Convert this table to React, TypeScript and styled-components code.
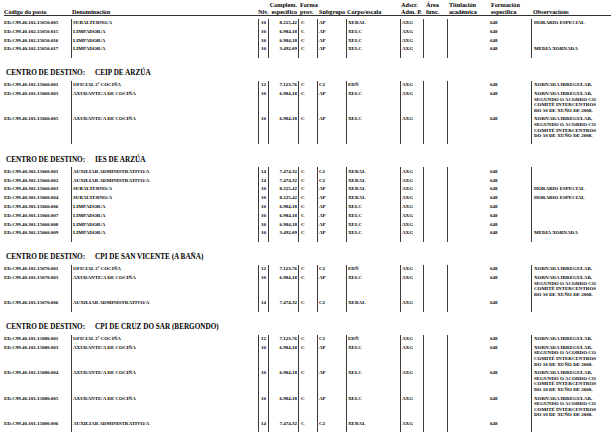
import React from "react";
import styled, { createGlobalStyle } from "styled-components";

const GlobalStyle = createGlobalStyle`
  html, body {
    margin: 0;
    padding: 0;
    background: #fff;
  }
  body {
    font-family: "Liberation Serif", "Times New Roman", serif;
    color: #000;
  }
`;

// column template shared by header and rows (x = 4 .. 611)
const COLS = "67px 187px 10px 30px 19px 29px 54px 23px 24px 41px 43px 1fr";

type Post = {
  code: string;
  den: string;
  niv: string;
  comp: string;
  sub: string;
  corpo: string;
  obs?: string[];
};

type Centre = {
  name?: string;
  posts: Post[];
};

const LONG = [
  "XORNADA IRREGULAR,",
  "SEGUNDO O ACORDO CO",
  "COMITÉ INTERCENTROS",
  "DO 10 DE XUÑO DE 2008.",
];
const IRREG = ["XORNADA IRREGULAR."];
const HORARIO = ["HORARIO ESPECIAL"];
const MEDIA = ["MEDIA XORNADA"];

const subalterno = (code: string, obs?: string[]): Post => ({
  code, den: "SUBALTERNO/A", niv: "10", comp: "8.225,42", sub: "AP", corpo: "XERAL", obs,
});
const limpador = (code: string, media = false): Post => ({
  code, den: "LIMPADOR/A", niv: "10", comp: media ? "3.492,09" : "6.984,18", sub: "AP", corpo: "XELC",
  obs: media ? MEDIA : undefined,
});
const oficial = (code: string): Post => ({
  code, den: "OFICIAL 2ª COCIÑA", niv: "12", comp: "7.123,76", sub: "C2", corpo: "EDÑ", obs: IRREG,
});
const axudante = (code: string): Post => ({
  code, den: "AXUDANTE/A DE COCIÑA", niv: "10", comp: "6.984,18", sub: "AP", corpo: "XELC", obs: LONG,
});
const auxiliar = (code: string): Post => ({
  code, den: "AUXILIAR ADMINISTRATIVO/A", niv: "14", comp: "7.474,32", sub: "C2", corpo: "XERAL",
});

const centres: Centre[] = [
  {
    posts: [
      subalterno("ED.C99.40.102.15050.005", HORARIO),
      limpador("ED.C99.40.102.15050.015"),
      limpador("ED.C99.40.102.15050.016"),
      limpador("ED.C99.40.102.15050.017", true),
    ],
  },
  {
    name: "CEIP DE ARZÚA",
    posts: [
      oficial("ED.C99.40.101.15060.001"),
      axudante("ED.C99.40.101.15060.003"),
      axudante("ED.C99.40.101.15060.005"),
    ],
  },
  {
    name: "IES DE ARZÚA",
    posts: [
      auxiliar("ED.C99.40.301.15060.001"),
      auxiliar("ED.C99.40.301.15060.002"),
      subalterno("ED.C99.40.301.15060.003", HORARIO),
      subalterno("ED.C99.40.301.15060.004", HORARIO),
      limpador("ED.C99.40.301.15060.006"),
      limpador("ED.C99.40.301.15060.007"),
      limpador("ED.C99.40.301.15060.008"),
      limpador("ED.C99.40.301.15060.009", true),
    ],
  },
  {
    name: "CPI DE SAN VICENTE (A BAÑA)",
    posts: [
      oficial("ED.C99.40.101.15070.001"),
      axudante("ED.C99.40.101.15070.003"),
      auxiliar("ED.C99.40.101.15070.006"),
    ],
  },
  {
    name: "CPI DE CRUZ DO SAR (BERGONDO)",
    posts: [
      oficial("ED.C99.40.101.15080.001"),
      axudante("ED.C99.40.101.15080.003"),
      axudante("ED.C99.40.101.15080.004"),
      axudante("ED.C99.40.101.15080.005"),
      auxiliar("ED.C99.40.101.15080.006"),
    ],
  },
];

export default function App() {
  return (
    <Page>
      <GlobalStyle />
      <Header>
        <HeadCell>Código do posto</HeadCell>
        <HeadCell $pad={1}>Denominación</HeadCell>
        <HeadCell $align="right">Niv.</HeadCell>
        <HeadCell $align="right" $pad={1}>
          Complem.<br />específico
        </HeadCell>
        <HeadCell $pad={2}>
          Forma<br />prov.
        </HeadCell>
        <HeadCell $pad={2}>Subgrupo</HeadCell>
        <HeadCell $pad={1}>Corpo/escala</HeadCell>
        <HeadCell $pad={1}>
          Adscr.<br />Adm. P.
        </HeadCell>
        <HeadCell $pad={3}>
          Área<br />func.
        </HeadCell>
        <HeadCell $pad={2}>
          Titulación<br />académica
        </HeadCell>
        <HeadCell $pad={3}>
          Formación<br />específica
        </HeadCell>
        <HeadCell $pad={2}>Observacións</HeadCell>
      </Header>

      {centres.map((c, i) => (
        <Section key={i}>
          {c.name && (
            <CentreTitle>
              <TitleLabel>CENTRO DE DESTINO:</TitleLabel>
              <span>{c.name}</span>
            </CentreTitle>
          )}
          <Rows $first={!c.name}>
            {c.posts.map((p) => (
              <Row key={p.code}>
                <Cell $bar={false}>{p.code}</Cell>
                <Cell $pad={1}>{p.den}</Cell>
                <Cell $align="center">{p.niv}</Cell>
                <Cell $align="right" $pad={1}>{p.comp}</Cell>
                <Cell $pad={2}>C</Cell>
                <Cell $pad={1}>{p.sub}</Cell>
                <Cell $pad={1}>{p.corpo}</Cell>
                <Cell $pad={1}>AXG</Cell>
                <Cell />
                <Cell />
                <Cell $bar={false} $pad={2}>648</Cell>
                <Cell $pad={2}>
                  {p.obs?.map((l) => (
                    <ObsLine key={l}>{l}</ObsLine>
                  ))}
                </Cell>
              </Row>
            ))}
            <Row $tail>
              <Cell $bar={false} $tail />
              <Cell $tail />
              <Cell $tail />
              <Cell $tail />
              <Cell $tail />
              <Cell $tail />
              <Cell $tail />
              <Cell $tail />
              <Cell $tail />
              <Cell $tail />
              <Cell $bar={false} $tail />
              <Cell $tail />
            </Row>
          </Rows>
        </Section>
      ))}
    </Page>
  );
}

const Page = styled.div`
  width: 615px;
  height: 439px;
  box-sizing: border-box;
  padding: 0 4px;
  overflow: hidden;
`;

const Header = styled.div`
  display: grid;
  grid-template-columns: ${COLS};
  align-items: end;
  padding-top: 0.5px;
  border-bottom: 1px solid #333;
`;

const HeadCell = styled.div<{ $align?: "left" | "right"; $pad?: number }>`
  font-size: 6.2px;
  font-weight: 700;
  line-height: 7px;
  white-space: nowrap;
  text-align: ${(p) => p.$align ?? "left"};
  padding-left: ${(p) => (p.$align === "right" ? 0 : p.$pad ?? 0)}px;
  padding-right: ${(p) => (p.$align === "right" ? p.$pad ?? 0 : 0)}px;
  direction: ${(p) => (p.$align === "right" ? "rtl" : "ltr")};
  unicode-bidi: plaintext;
`;

const Section = styled.section``;

const CentreTitle = styled.h2`
  display: flex;
  align-items: baseline;
  margin: 11.5px 0 2.5px 2px;
  font-size: 7.2px;
  line-height: 9px;
  font-weight: 700;
  white-space: nowrap;
`;

const TitleLabel = styled.span`
  margin-right: 10px;
`;

const Rows = styled.div<{ $first?: boolean }>`
  margin-top: ${(p) => (p.$first ? 3 : 0)}px;
`;

const Row = styled.div<{ $tail?: boolean }>`
  display: grid;
  grid-template-columns: ${COLS};
  align-items: stretch;
  height: ${(p) => (p.$tail ? "4px" : "auto")};
`;

const Cell = styled.div<{
  $bar?: boolean;
  $align?: "left" | "center" | "right";
  $pad?: number;
  $tail?: boolean;
}>`
  box-sizing: border-box;
  border-left: ${(p) => (p.$bar === false ? "none" : "1px solid #3a3a3a")};
  padding: ${(p) => (p.$tail ? "0" : "1.5px 0")};
  padding-left: ${(p) => (p.$align === "right" ? 0 : p.$pad ?? 0)}px;
  padding-right: ${(p) => (p.$align === "right" ? p.$pad ?? 0 : 0)}px;
  text-align: ${(p) => p.$align ?? "left"};
  font-size: 5px;
  font-weight: 700;
  line-height: 5.8px;
  white-space: nowrap;
  min-width: 0;
`;

const ObsLine = styled.div`
  line-height: 5.6px;
`;
